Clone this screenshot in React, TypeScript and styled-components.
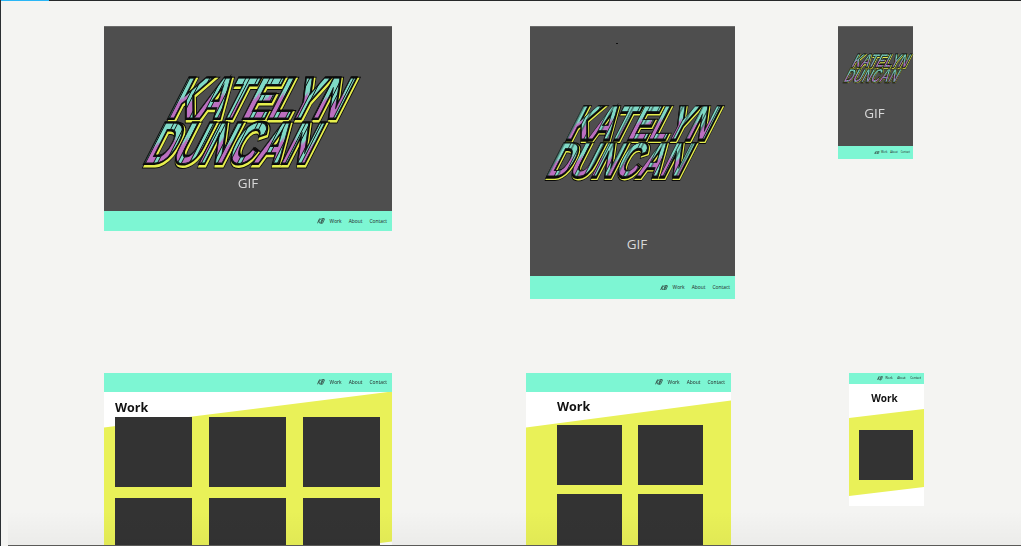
import { useId } from 'react';
import styled, { createGlobalStyle } from 'styled-components';

const GlobalStyle = createGlobalStyle`
  html, body {
    margin: 0;
    height: 100%;
    overflow: hidden;
    background: #f4f4f2;
    font-family: "Open Sans", "Liberation Sans", sans-serif;
  }
`;

const Canvas = styled.main`
  position: relative;
  width: 1021px;
  height: 546px;
  overflow: hidden;
  background: #f4f4f2;
  border-left: 1px solid #2b2f33;
  box-sizing: border-box;
`;

const ProgressTrack = styled.div`
  position: absolute;
  inset: 0 0 auto 0;
  height: 1px;
  background: #26282a;
`;

const ProgressFill = styled.div`
  width: 48px;
  height: 100%;
  background: #2ab6f6;
`;

const BottomEdge = styled.div`
  position: absolute;
  left: 7px;
  right: 0;
  bottom: 0;
  height: 34px;
  border-bottom: 1px solid #5a5a58;
  background: linear-gradient(rgba(0, 0, 0, 0), rgba(0, 0, 0, 0.035));
  pointer-events: none;
`;

/* artboards sit on a free canvas, so their place is the content */
const Artboard = styled.section<{ $x: number; $y: number; $w: number; $h: number }>`
  position: absolute;
  left: ${p => p.$x - 1}px;
  top: ${p => p.$y}px;
  width: ${p => p.$w}px;
  height: ${p => p.$h}px;
  display: flex;
  flex-direction: column;
  background: #fff;
  filter: blur(0.3px);
`;

const Hero = styled.div<{ $logoTop: number; $gifGap: number }>`
  flex: 1;
  position: relative;
  display: flex;
  flex-direction: column;
  align-items: center;
  background: #4e4e4e;
  padding-top: ${p => p.$logoTop}px;
  gap: ${p => p.$gifGap}px;
  box-shadow: inset 0 1px 0 #6b6b6b;
`;

const LogoSvg = styled.svg<{ $w: number; $shift: number }>`
  display: block;
  flex: none;
  width: ${p => p.$w}px;
  margin-left: ${p => p.$shift}px;
  overflow: visible;
`;

const GifLabel = styled.span<{ $shift: number }>`
  margin-left: ${p => p.$shift}px;
  font-size: 13.5px;
  line-height: 16px;
  color: #d8d8d8;
`;

const Speck = styled.i`
  position: absolute;
  left: 86px;
  top: 17px;
  width: 2px;
  height: 1px;
  background: #111;
`;

const NavBar = styled.nav<{ $h: number; $size: number; $gap: number; $pad: number }>`
  flex: none;
  height: ${p => p.$h}px;
  display: flex;
  align-items: center;
  justify-content: flex-end;
  gap: ${p => p.$gap}px;
  padding-right: ${p => p.$pad}px;
  background: #7df6d3;
  color: #222;
  font-size: ${p => p.$size}px;
  line-height: 1;
`;

const NavMark = styled.svg<{ $w: number }>`
  display: block;
  width: ${p => p.$w}px;
  height: ${p => p.$w * 0.72}px;
  margin-right: -2px;
`;

const WorkSection = styled.div<{ $top: number; $pad: number }>`
  flex: 1;
  position: relative;
  overflow: hidden;
  padding: ${p => p.$top}px 0 0 ${p => p.$pad}px;
`;

const YellowBand = styled.div<{ $shape: string }>`
  position: absolute;
  inset: 0;
  background: #e9f158;
  clip-path: polygon(${p => p.$shape});
`;

const WorkTitle = styled.h2<{ $size: number; $below: number; $right?: number }>`
  position: relative;
  margin: 0 ${p => p.$right ?? 0}px ${p => p.$below}px 0;
  font-size: ${p => p.$size}px;
  line-height: ${p => p.$size + 4}px;
  font-weight: 700;
  color: #111;
  text-align: ${p => (p.$right ? 'center' : 'left')};
`;

const Thumbs = styled.div<{ $cols: number; $w: number; $h: number; $colGap: number; $rowGap: number }>`
  position: relative;
  display: grid;
  grid-template-columns: repeat(${p => p.$cols}, ${p => p.$w}px);
  grid-auto-rows: ${p => p.$h}px;
  column-gap: ${p => p.$colGap}px;
  row-gap: ${p => p.$rowGap}px;
`;

const Thumb = styled.div`
  background: #333;
`;

const layers = [
  { dx: 2, dy: 1.6, sw: 7, stroke: '#0a0a0a' },
  { dx: 1.9, dy: 1.5, sw: 4.8, stroke: '#e6ee4e' },
  { dx: 0.4, dy: 0.3, sw: 4, stroke: '#0a0a0a' },
];

const lines = [
  { text: 'KATELYN', x: 26, y: 44, len: 172 },
  { text: 'DUNCAN', x: 2, y: 89, len: 165 },
];

const Wordmark = ({ w, shift = 0 }: { w: number; shift?: number }) => {
  const id = useId();
  return (
    <LogoSvg viewBox="0 0 217 92" $w={w} $shift={shift}>
      <defs>
        <pattern id={id} width="12" height="44" patternUnits="userSpaceOnUse">
          <rect width="12" height="44" fill="#7fd9c6" />
          <path d="M4 44V30l2-8 1 5 2-10 1 6 2-5v26z" fill="#bb6fc0" />
          <path d="M3.5 44V2M11.5 44V2" stroke="#0f1413" strokeWidth="1" fill="none" />
        </pattern>
      </defs>
      {lines.map(line => (
        <g key={line.text} transform={`translate(${line.x} ${line.y}) skewX(-27)`}>
          {layers.map((l, i) => (
            <text
              key={i}
              x={l.dx}
              y={l.dy}
              textLength={line.len}
              lengthAdjust="spacingAndGlyphs"
              fontFamily="'Liberation Sans', sans-serif"
              fontWeight="700"
              fontSize="58"
              fill="none"
              stroke={l.stroke}
              strokeWidth={l.sw}
            >
              {line.text}
            </text>
          ))}
          <text
            textLength={line.len}
            lengthAdjust="spacingAndGlyphs"
            fontFamily="'Liberation Sans', sans-serif"
            fontWeight="700"
            fontSize="58"
            fill={`url(#${id})`}
            stroke="#101414"
            strokeWidth="1"
          >
            {line.text}
          </text>
        </g>
      ))}
    </LogoSvg>
  );
};

const Nav = ({ h, size = 4.9, gap = 7, pad = 5, mark = 8 }: { h: number; size?: number; gap?: number; pad?: number; mark?: number }) => (
  <NavBar $h={h} $size={size} $gap={gap} $pad={pad}>
    <NavMark viewBox="0 0 18 13" $w={mark}>
      <g fill="none" stroke="#222" strokeWidth="1.5">
        <path d="M6 1 1 12M10 1 4 6l2 6" />
        <path d="M12 1h4l1 1-4 9-1 1H8l4-11zM14 2l-4 9" />
      </g>
    </NavMark>
    <span>Work</span>
    <span>About</span>
    <span>Contact</span>
  </NavBar>
);

const HOME = [
  { x: 104, w: 288, h: 205, bar: 20, logoW: 217, shift: 0, top: 48, gap: 9, gifShift: 0 },
  { x: 530, w: 205, h: 273, bar: 23, logoW: 179, shift: 0, top: 77, gap: 57, gifShift: 9, speck: true },
  { x: 838, w: 75, h: 133, bar: 13, logoW: 70, shift: 3, top: 27, gap: 22, gifShift: -2, tiny: true },
];

const App = () => (
  <>
    <GlobalStyle />
    <Canvas>
      <ProgressTrack>
        <ProgressFill />
      </ProgressTrack>

      {HOME.map(a => (
        <Artboard key={a.x} $x={a.x} $y={26} $w={a.w} $h={a.h}>
          <Hero $logoTop={a.top} $gifGap={a.gap}>
            {a.speck && <Speck />}
            <Wordmark w={a.logoW} shift={a.shift} />
            <GifLabel $shift={a.gifShift}>GIF</GifLabel>
          </Hero>
          {a.tiny ? <Nav h={a.bar} size={2.6} gap={3} pad={3} mark={5.5} /> : <Nav h={a.bar} />}
        </Artboard>
      ))}

      <Artboard $x={104} $y={373} $w={288} $h={300}>
        <Nav h={18.5} />
        <WorkSection $top={8} $pad={11}>
          <YellowBand $shape="0 36px, 100% 0, 100% 150px, 0 186px" />
          <WorkTitle $size={12.5} $below={0.5}>Work</WorkTitle>
          <Thumbs $cols={3} $w={76.7} $h={70.5} $colGap={17.5} $rowGap={10.5}>
            {Array.from({ length: 6 }, (_, i) => <Thumb key={i} />)}
          </Thumbs>
        </WorkSection>
      </Artboard>

      <Artboard $x={526} $y={373} $w={205} $h={300}>
        <Nav h={18.5} pad={6} />
        <WorkSection $top={7.5} $pad={31}>
          <YellowBand $shape="0 36px, 100% 9px, 100% 100%, 0 100%" />
          <WorkTitle $size={12.5} $below={9}>Work</WorkTitle>
          <Thumbs $cols={2} $w={65.3} $h={60} $colGap={15.4} $rowGap={9}>
            {Array.from({ length: 4 }, (_, i) => <Thumb key={i} />)}
          </Thumbs>
        </WorkSection>
      </Artboard>

      <Artboard $x={849} $y={373} $w={75} $h={133}>
        <Nav h={11} size={3} gap={4.6} pad={3} mark={6} />
        <WorkSection $top={7} $pad={10}>
          <YellowBand $shape="0 34px, 100% 25px, 100% 103px, 0 112px" />
          <WorkTitle $size={10} $below={24.5} $right={14}>Work</WorkTitle>
          <Thumbs $cols={1} $w={54} $h={50} $colGap={0} $rowGap={0}>
            <Thumb />
          </Thumbs>
        </WorkSection>
      </Artboard>

      <BottomEdge />
    </Canvas>
  </>
);

export default App;
